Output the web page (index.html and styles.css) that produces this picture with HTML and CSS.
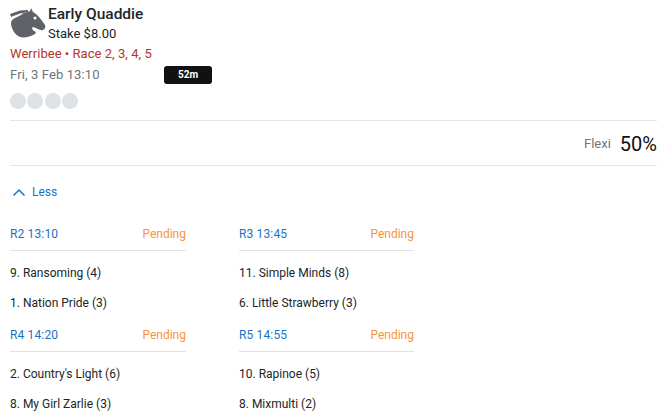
FILE: index.html
```html
<!DOCTYPE html>
<html lang="en">

<head>
    <meta charset="UTF-8" />
    <title>Early Quaddie</title>
    <link rel="stylesheet" href="styles.css">
</head>

<body>
    <div class="summary">
        <div class="bet-head">
            <svg class="silk" viewBox="10 7 36 32" width="36" height="32">
                <path fill="#5f6368" d="M31 8 L33 12 C37 14 41 19 45 25 C46 27 45 29 43 30 C40 31 37 28 33 27 C31 28 33 31 36 32 L35 34 C30 37 24 38 20 37 C15 35 12 30 11 24 C11 19 15 16 18 15 C23 13 28 12 30 11 Z" />
                <path fill="#5f6368" d="M10 14 L20 10.500 L28 10 L28 12 L20 13.500 L11 17 Z" />
                <path fill="#fff" d="M10 17.500 L20 14 L24 13.500 L14 18.500 L11 21 Z" />
                <circle fill="#fff" cx="35" cy="18" r="1.500" />
            </svg>
            <div>
                <div class="bet-name">Early Quaddie</div>
                <div class="stake">Stake $8.00</div>
            </div>
        </div>
        <div class="venue">Werribee • Race 2, 3, 4, 5</div>
        <div class="start-row">
            <span class="start-time">Fri, 3 Feb 13:10</span>
            <span class="countdown">52m</span>
        </div>
        <div class="dots">
            <span></span>
            <span></span>
            <span></span>
            <span></span>
        </div>
    </div>

    <div class="flexi-row">
        <span class="flexi-label">Flexi</span>
        <span class="flexi-value">50%</span>
    </div>

    <div class="toggle">
        <svg viewBox="0 0 14 9" width="14" height="9">
            <path d="M1.500 7.500 L7 2 L12.500 7.500" fill="none" stroke="#1a73c4" stroke-width="1.500" />
        </svg>
        <span>Less</span>
    </div>

    <div class="legs">
        <div class="leg">
            <div class="leg-head"><span class="leg-race">R2 13:10</span><span class="leg-status">Pending</span></div>
            <div class="runner">9. Ransoming (4)</div>
            <div class="runner">1. Nation Pride (3)</div>
        </div>
        <div class="leg">
            <div class="leg-head"><span class="leg-race">R3 13:45</span><span class="leg-status">Pending</span></div>
            <div class="runner">11. Simple Minds (8)</div>
            <div class="runner">6. Little Strawberry (3)</div>
        </div>
        <div class="leg">
            <div class="leg-head"><span class="leg-race">R4 14:20</span><span class="leg-status">Pending</span></div>
            <div class="runner">2. Country's Light (6)</div>
            <div class="runner">8. My Girl Zarlie (3)</div>
        </div>
        <div class="leg">
            <div class="leg-head"><span class="leg-race">R5 14:55</span><span class="leg-status">Pending</span></div>
            <div class="runner">10. Rapinoe (5)</div>
            <div class="runner">8. Mixmulti (2)</div>
        </div>
    </div>
</body>

</html>
```
FILE: styles.css
```css
html,
body {
    height: 100%;
    overflow: hidden;
}

body {
    margin: 0;
    padding: 0 9px 0 10px;
    background-color: white;
    color: #212529;
    font-family: Roboto, "Liberation Sans", sans-serif;
    font-size: 12px;
}

.summary {
    height: 120px;
    border-bottom: 1px solid #e6e6e6;
}

.bet-head {
    display: flex;
    gap: 2px;
    padding-top: 6px;
    height: 40px;
}

.silk {
    margin-top: 1px;
}

.bet-name {
    font-size: 15.500px;
    font-weight: 500;
    line-height: 16px;
}

.stake {
    margin-top: 4px;
    font-size: 13px;
    line-height: 16px;
}

.venue {
    color: #b5342c;
    font-size: 13px;
    letter-spacing: 0.04px;
    line-height: 16px;
}

.start-row {
    display: flex;
    align-items: center;
    gap: 24px;
    margin-top: 4px;
}

.start-time {
    width: 130px;
    color: #6c757d;
    font-size: 13px;
    letter-spacing: 0.12px;
    line-height: 16px;
}

.countdown {
    width: 48px;
    height: 18px;
    border-radius: 3px;
    background-color: #111;
    color: white;
    font-size: 10px;
    font-weight: 700;
    line-height: 18px;
    text-align: center;
}

.dots {
    display: flex;
    gap: 1.330px;
    margin-top: 9px;
}

.dots span {
    width: 16px;
    height: 16px;
    border-radius: 50%;
    background-color: #dee2e6;
}

.flexi-row {
    display: flex;
    justify-content: flex-end;
    align-items: center;
    gap: 9px;
    height: 44px;
    border-bottom: 1px solid #e6e6e6;
}

.flexi-label {
    color: #6c757d;
    font-size: 13px;
}

.flexi-value {
    padding-top: 1px;
    color: #111;
    font-size: 20px;
}

.toggle {
    display: flex;
    align-items: center;
    gap: 6px;
    height: 16px;
    margin-top: 18px;
    padding-left: 2px;
    color: #1a73c4;
    font-size: 12px;
}

.legs {
    display: grid;
    grid-template-columns: 176px 175px;
    column-gap: 53px;
    margin-top: 26px;
}

.leg {
    margin-bottom: 9px;
}

.leg-head {
    display: flex;
    justify-content: space-between;
    height: 24px;
    border-bottom: 1px solid #dee2e6;
    line-height: 16px;
}

.leg-race {
    color: #1a73c4;
    letter-spacing: 0.15px;
}

.leg-status {
    color: #f7933e;
}

.runner {
    height: 30px;
    line-height: 30px;
}

.leg-head + .runner {
    margin-top: 7px;
}
```
